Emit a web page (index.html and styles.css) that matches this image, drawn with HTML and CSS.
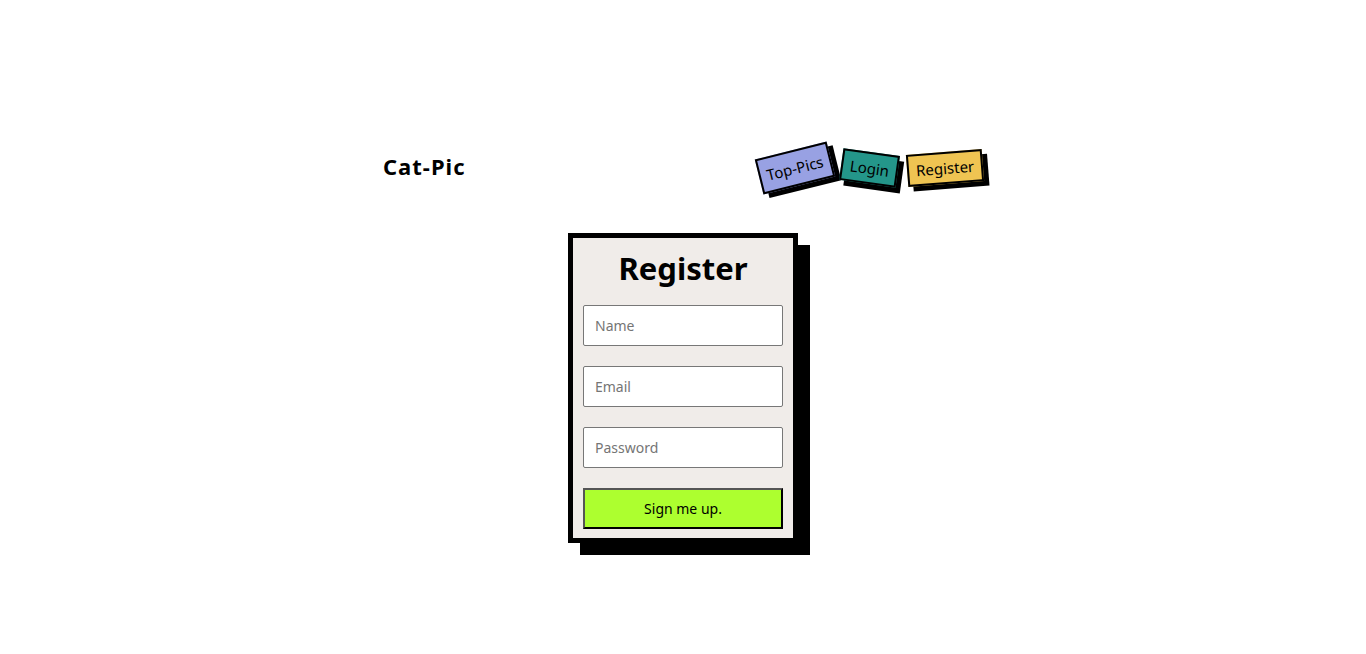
FILE: index.html
```html
<!DOCTYPE html>
<html lang="en">
<head>
<meta charset="utf-8">
<title>Cat-Pic - Register</title>
<link rel="stylesheet" href="styles.css">
</head>
<body>
<div class="page">
  <header class="header">
    <div class="logo">Cat-Pic</div>
    <nav class="nav">
      <a class="nav-link top" href="#">Top-Pics</a>
      <a class="nav-link login" href="#">Login</a>
      <a class="nav-link register" href="#">Register</a>
    </nav>
  </header>
  <main class="card">
    <h1 class="title">Register</h1>
    <form class="form">
      <input class="field" type="text" placeholder="Name">
      <input class="field" type="email" placeholder="Email">
      <input class="field" type="password" placeholder="Password">
      <button class="submit" type="button">Sign me up.</button>
    </form>
  </main>
</div>
</body>
</html>
```
FILE: styles.css
```css
html, body {
  margin: 0;
  padding: 0;
  background: #ffffff;
}
body {
  font-family: "Noto Sans", "Open Sans", sans-serif;
  color: #000;
}
.page {
  box-sizing: border-box;
  min-height: 100vh;
  display: flex;
  flex-direction: column;
  align-items: center;
  padding-top: 148px;
  padding-bottom: 40px;
}
.header {
  width: 600px;
  height: 40px;
  display: flex;
  align-items: center;
  justify-content: space-between;
}
.logo {
  font-size: 22px;
  font-weight: 700;
  letter-spacing: 1px;
  margin-top: -4px;
}
.nav {
  display: flex;
  align-items: center;
  gap: 9px;
}
.nav-link {
  display: inline-block;
  font-size: 15px;
  line-height: 20px;
  padding: 4px 7px;
  border: 2px solid #000;
  color: #000;
  text-decoration: none;
  box-shadow: 5px 5px 0 #000;
}
.nav-link.top {
  background: #98a1e3;
  transform: rotate(-14deg);
  padding: 6px 6px;
}
.nav-link.login {
  background: #24968a;
  transform: rotate(8deg);
}
.nav-link.register {
  background: #efc452;
  transform: rotate(-4.5deg);
}
.card {
  margin-top: 45px;
  width: 200px;
  padding: 0 10px 9px;
  background: #f0ece9;
  border: 5px solid #000;
  box-shadow: 12px 12px 0 #000;
}
.title {
  margin: 0;
  height: 67px;
  line-height: 60px;
  font-size: 31px;
  font-weight: 700;
  text-align: center;
}
.form {
  display: flex;
  flex-direction: column;
  gap: 20px;
}
.field {
  box-sizing: border-box;
  width: 200px;
  height: 41px;
  margin: 0;
  padding: 0 11px;
  border: 1px solid #777;
  border-radius: 2px;
  background: #fff;
  font-family: inherit;
  font-size: 14px;
  color: #000;
}
.field::placeholder {
  color: #757575;
}
.submit {
  box-sizing: border-box;
  width: 200px;
  height: 41px;
  margin: 0;
  background: #adff2f;
  border: 2px solid;
  border-color: #555 #000 #000 #555;
  font-family: inherit;
  font-size: 14px;
  color: #000;
}
```
